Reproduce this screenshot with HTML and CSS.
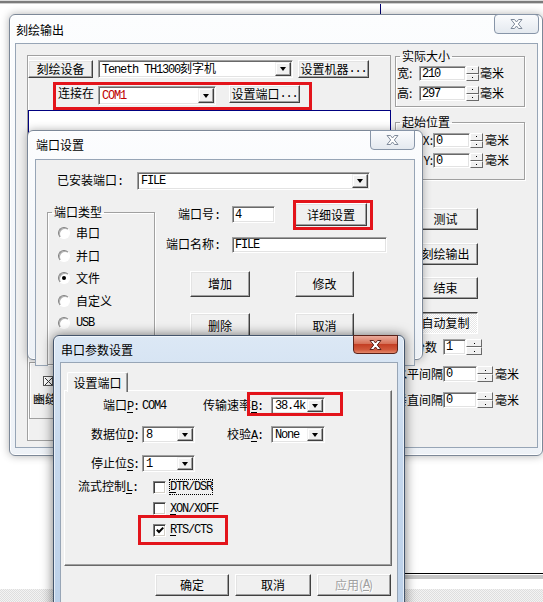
FILE: index.html
```html
<!DOCTYPE html>
<html lang="zh-CN">
<head>
    <meta charset="UTF-8">
    <title>刻绘输出</title>
    <link rel="stylesheet" href="styles.css">
</head>
<body>
<div class="desk">
    <div class="topstrip"></div>
    <div class="bg-blueline"></div>
    <div class="bg-rule"></div>
    <div class="bg-rule-shade"></div>
    <div class="bg-band"></div>

    <!-- main window -->
    <div class="win inactive win-main">
        <div class="titlebar">
            <span class="title">刻绘输出</span>
            <span class="close"><svg width="13" height="10" viewBox="0 0 13 10"><path d="M1 .5H4.5L6.5 3 8.5 .5H12L8.3 5 12 9.5H8.5L6.5 7 4.5 9.5H1L4.7 5z"/></svg></span>
        </div>
        <div class="client main-client">
            <div class="left-panel">
                <div class="row-dev">
                    <span class="btn b-dev">刻绘设备</span>
                    <div class="combo c-dev"><span class="val"><span class="en">Teneth TH1300</span>刻字机</span><span class="drop"></span></div>
                    <span class="btn b-machine">设置机器<span class="en">...</span></span>
                </div>
                <div class="row-conn">
                    <span class="lbl">连接在</span>
                    <div class="combo c-com"><span class="val en red">COM1</span><span class="drop"></span></div>
                    <span class="btn b-setport">设置端口<span class="en">...</span></span>
                </div>
                <div class="preview"></div>
                <div class="lower-box">
                    <span class="xbox"><svg width="7" height="7" viewBox="0 0 7 7"><path d="M0 0L7 7M7 0L0 7" stroke="#333" stroke-width="1"/></svg></span>
                    <span class="lower-text">豳缝</span>
                </div>
            </div>
            <div class="right-col">
                <fieldset class="grp g-size">
                    <legend>实际大小</legend>
                    <div class="spin-row">
                        <span class="lbl">宽:</span>
                        <span class="edit en">210</span>
                        <span class="spin"><i></i><i></i></span>
                        <span class="unit">毫米</span>
                    </div>
                    <div class="spin-row">
                        <span class="lbl">高:</span>
                        <span class="edit en">297</span>
                        <span class="spin"><i></i><i></i></span>
                        <span class="unit">毫米</span>
                    </div>
                </fieldset>
                <fieldset class="grp g-pos">
                    <legend>起始位置</legend>
                    <div class="spin-row">
                        <span class="lbl">X:</span>
                        <span class="edit en">0</span>
                        <span class="spin"><i></i><i></i></span>
                        <span class="unit">毫米</span>
                    </div>
                    <div class="spin-row">
                        <span class="lbl">Y:</span>
                        <span class="edit en">0</span>
                        <span class="spin"><i></i><i></i></span>
                        <span class="unit">毫米</span>
                    </div>
                </fieldset>
                <div class="cmd-btns">
                    <span class="btn">测试</span>
                    <span class="btn">刻绘输出</span>
                    <span class="btn">结束</span>
                    <span class="btn pushed">自动复制</span>
                </div>
                <div class="copy-rows">
                    <div class="copy-row c-count">
                        <span class="lbl">份数</span>
                        <span class="edit en">1</span>
                        <span class="spin"><i></i><i></i></span>
                    </div>
                    <div class="copy-row c-h">
                        <span class="lbl">水平间隔</span>
                        <span class="edit en">0</span>
                        <span class="spin"><i></i><i></i></span>
                        <span class="unit">毫米</span>
                    </div>
                    <div class="copy-row c-v">
                        <span class="lbl">垂直间隔</span>
                        <span class="edit en">0</span>
                        <span class="spin"><i></i><i></i></span>
                        <span class="unit">毫米</span>
                    </div>
                </div>
            </div>
        </div>
    </div>

    <!-- port settings -->
    <div class="win inactive win-port">
        <div class="titlebar">
            <span class="title">端口设置</span>
            <span class="close"><svg width="13" height="10" viewBox="0 0 13 10"><path d="M1 .5H4.5L6.5 3 8.5 .5H12L8.3 5 12 9.5H8.5L6.5 7 4.5 9.5H1L4.7 5z"/></svg></span>
        </div>
        <div class="client">
            <div class="row-installed">
                <span class="lbl">已安装端口<span class="en">:</span></span>
                <div class="combo c-installed"><span class="val en">FILE</span><span class="drop"></span></div>
            </div>
            <div class="port-main">
                <fieldset class="grp g-type">
                    <legend>端口类型</legend>
                    <div class="radios">
                        <div class="radio-row"><span class="radio"></span>串口</div>
                        <div class="radio-row"><span class="radio"></span>并口</div>
                        <div class="radio-row"><span class="radio on"></span>文件</div>
                        <div class="radio-row"><span class="radio"></span>自定义</div>
                        <div class="radio-row"><span class="radio"></span><span class="en">USB</span></div>
                    </div>
                </fieldset>
                <div class="port-right">
                    <div class="pr-row pr-num">
                        <span class="lbl">端口号<span class="en">:</span></span>
                        <span class="edit en e-num">4</span>
                        <span class="btn b-detail">详细设置</span>
                    </div>
                    <div class="pr-row pr-name">
                        <span class="lbl">端口名称<span class="en">:</span></span>
                        <span class="edit en e-name">FILE</span>
                    </div>
                    <div class="pr-btns">
                        <span class="btn">增加</span>
                        <span class="btn">修改</span>
                    </div>
                    <div class="pr-btns second">
                        <span class="btn">删除</span>
                        <span class="btn">取消</span>
                    </div>
                </div>
            </div>
        </div>
    </div>

    <!-- serial parameters -->
    <div class="win active win-serial">
        <div class="titlebar">
            <span class="title">串口参数设置</span>
            <span class="close"><svg width="13" height="10" viewBox="0 0 13 10"><path d="M1 .5H4.5L6.5 3 8.5 .5H12L8.3 5 12 9.5H8.5L6.5 7 4.5 9.5H1L4.7 5z"/></svg></span>
        </div>
        <div class="client">
            <div class="tabs"><span class="tab">设置端口</span></div>
            <div class="tab-panel">
                <div class="param-grid">
                    <span class="lbl">端口<u class="en">P</u><span class="en">:</span></span>
                    <span class="en static">COM4</span>
                    <span class="lbl lbl2">传输速率<u class="en">B</u><span class="en">:</span></span>
                    <div class="combo"><span class="val en">38.4k</span><span class="drop"></span></div>

                    <span class="lbl">数据位<u class="en">D</u><span class="en">:</span></span>
                    <div class="combo"><span class="val en">8</span><span class="drop"></span></div>
                    <span class="lbl lbl2">校验<u class="en">A</u><span class="en">:</span></span>
                    <div class="combo"><span class="val en">None</span><span class="drop"></span></div>

                    <span class="lbl">停止位<u class="en">S</u><span class="en">:</span></span>
                    <div class="combo"><span class="val en">1</span><span class="drop"></span></div>
                </div>
                <div class="flow-grid">
                    <span class="lbl">流式控制<u class="en">L</u><span class="en">:</span></span>
                    <div class="chk-row"><span class="chk"></span><span class="en focus"><u>D</u>TR/DSR</span></div>
                    <span></span>
                    <div class="chk-row"><span class="chk"></span><span class="en"><u>X</u>ON/XOFF</span></div>
                    <span></span>
                    <div class="chk-row"><span class="chk"><svg width="8" height="8" viewBox="0 0 8 8"><path d="M.8 3.8L3 6 7.2 1.6" fill="none" stroke="#000" stroke-width="2"/></svg></span><span class="en"><u>R</u>TS/CTS</span></div>
                </div>
            </div>
            <div class="dlg-btns">
                <span class="btn b-ok">确定</span>
                <span class="btn b-cancel">取消</span>
                <span class="btn b-apply disabled">应用(<u class="en">A</u>)</span>
            </div>
        </div>
    </div>

    <!-- red annotation marks -->
    <div class="mark m-conn"></div>
    <div class="mark m-detail"></div>
    <div class="mark m-baud"></div>
    <div class="mark m-rts"></div>
</div>
</body>
</html>
```

FILE: styles.css
```css
* {
    box-sizing: border-box;
}

body {
    margin: 0;
    background: #fff;
    color: #000;
    font: 12px/14px "Noto Sans CJK SC", sans-serif;
}

.en {
    font-family: "Liberation Mono", "Noto Sans CJK SC", monospace;
    letter-spacing: -1.2px;
}

u.en,
.en u {
    text-decoration: underline;
    text-underline-offset: 2px;
}

.red {
    color: #c00000;
}

.desk {
    position: relative;
    width: 543px;
    height: 602px;
    overflow: hidden;
    background: #fff;
}

/* pieces of the application behind the dialogs */
.topstrip {
    height: 4px;
    background: linear-gradient(#dcdcdc 0 1px, #7b7b7b 1px 3px, #cfcfcf 3px);
}

.bg-blueline {
    position: absolute;
    left: 380px;
    top: 4px;
    width: 1px;
    height: 10px;
    background: #00006e;
}

.bg-rule {
    position: absolute;
    left: 400px;
    top: 573px;
    width: 143px;
    height: 1px;
    background: #000;
}

.bg-rule-shade {
    position: absolute;
    left: 400px;
    top: 575px;
    width: 143px;
    height: 4px;
    background: #c6c6c6;
}

.bg-band {
    position: absolute;
    left: 0;
    top: 589px;
    width: 543px;
    height: 13px;
    background: repeating-conic-gradient(#dedede 0 25%, #f3f3f3 0 50%) 0 0 / 2px 2px;
}

/* windows */
.win {
    position: absolute;
    display: flex;
    flex-direction: column;
    border: 1px solid #7c8898;
    border-radius: 6px;
}

.win.inactive {
    background: linear-gradient(#fcfdfe, #eef2f7);
    box-shadow: 0 0 8px rgba(0, 0, 0, 0.3), inset 0 0 0 1px rgba(255, 255, 255, 0.9);
}

.win.active {
    background: linear-gradient(#dce8f5, #c6d8ed 40%, #bacfe8);
    border-color: #44556c;
    box-shadow: 0 0 12px rgba(0, 0, 0, 0.55), inset 0 0 0 1px rgba(255, 255, 255, 0.6);
}

.titlebar {
    display: flex;
    justify-content: space-between;
    align-items: flex-start;
    flex: none;
}

.title {
    padding: 7px 0 0 1px;
}

.close {
    width: 45px;
    height: 20px;
    margin-top: -1px;
    border: 1px solid #8795a8;
    border-radius: 0 0 4px 4px;
    background: linear-gradient(#fafbfd, #e4e9ef);
    display: flex;
    align-items: center;
    justify-content: center;
}

.close path {
    fill: #fff;
    stroke: #7f8a9a;
}

.active .close {
    height: 19px;
    border-color: #5b2219;
    background: linear-gradient(#ebab9c, #d67158 45%, #c43f25 50%, #d0583b 80%, #e4896c);
}

.active .close path {
    fill: #fff;
    stroke: #5a2119;
}

.client {
    flex: 1;
    background: #f0f0f0;
    border: 1px solid #97a5b6;
}

.win-main {
    left: 9px;
    top: 14px;
    width: 534px;
    height: 442px;
    padding: 0 4px 7px 5px;
    background: radial-gradient(circle at 378px 16px, rgba(160, 205, 240, 0.75), rgba(160, 205, 240, 0) 16px), linear-gradient(#fcfdfe, #eef2f7);
}

.win-main .titlebar {
    height: 28px;
}

.win-main .title {
    padding-top: 8px;
}

.win-main .close {
    margin-right: -1px;
    border-radius: 4px;
}

.win-port {
    left: 27px;
    top: 130px;
    width: 396px;
    height: 230px;
    padding: 0 7px 7px;
}

.win-port .titlebar {
    height: 28px;
}

.win-serial {
    left: 53px;
    top: 335px;
    width: 352px;
    height: 290px;
    padding: 0 6px 7px;
}

.win-serial .titlebar {
    height: 26px;
}

/* classic controls */
.btn {
    display: flex;
    align-items: center;
    justify-content: center;
    background: #f0f0f0;
    border: 1px solid;
    border-color: #fff #404040 #404040 #fff;
    box-shadow: inset -1px -1px #a0a0a0, inset 1px 1px #e3e3e3;
    white-space: nowrap;
}

.btn.pushed {
    border-color: #404040 #fff #fff #404040;
    box-shadow: inset 1px 1px #a0a0a0;
    background: repeating-conic-gradient(#fff 0 25%, #e6e6e6 0 50%) 0 0 / 2px 2px;
}

.btn.disabled {
    color: #a0a0a0;
    text-shadow: 1px 1px #fff;
}

.edit,
.combo {
    display: flex;
    align-items: center;
    background: #fff;
    border: 1px solid;
    border-color: #a0a0a0 #fff #fff #a0a0a0;
    box-shadow: inset 1px 1px #696969, inset -1px -1px #e3e3e3;
    white-space: nowrap;
}

.edit {
    padding-left: 2px;
}

.combo {
    align-items: stretch;
    padding: 1px;
}

.combo .val {
    flex: 1;
    min-width: 0;
    align-self: center;
    padding-left: 2px;
    line-height: 14px;
    white-space: nowrap;
}

.drop {
    width: 16px;
    flex: none;
    display: flex;
    align-items: center;
    justify-content: center;
    background: #f0f0f0;
    border: 1px solid;
    border-color: #f0f0f0 #404040 #404040 #f0f0f0;
    box-shadow: inset -1px -1px #a0a0a0, inset 1px 1px #fff;
}

.drop::after {
    content: "";
    border-left: 3.5px solid transparent;
    border-right: 3.5px solid transparent;
    border-top: 4px solid #000;
}

.spin {
    display: flex;
    flex-direction: column;
    flex: none;
}

.spin i {
    flex: 1;
    display: flex;
    align-items: center;
    justify-content: center;
    background: #f0f0f0;
    border: 1px solid;
    border-color: #fff #696969 #696969 #fff;
}

.spin i::after {
    content: "";
    width: 1px;
    height: 1px;
    background: #000;
}

.grp {
    margin: 0;
    padding: 0 0 5px 1px;
    min-width: 0;
    border: 1px solid #a0a0a0;
    box-shadow: 1px 1px #fff, inset 1px 1px #fff;
}

.grp legend {
    margin-left: 3px;
    padding: 0 2px;
    line-height: 14px;
}

.radio {
    width: 12px;
    height: 12px;
    flex: none;
    display: flex;
    align-items: center;
    justify-content: center;
    border-radius: 50%;
    background: #fff;
    border: 1px solid;
    border-color: #808080 #fff #fff #808080;
    box-shadow: inset 1px 1px #b0b0b0;
}

.radio.on::after {
    content: "";
    width: 4px;
    height: 4px;
    border-radius: 50%;
    background: #000;
}

.chk {
    width: 13px;
    height: 13px;
    flex: none;
    display: flex;
    align-items: center;
    justify-content: center;
    background: #fff;
    border: 1px solid;
    border-color: #808080 #fff #fff #808080;
    box-shadow: inset 1px 1px #404040, inset -1px -1px #d4d0c8;
}

/* main window content */
.main-client {
    display: flex;
    align-items: flex-start;
}

.left-panel {
    width: 364px;
    height: 386px;
    margin: 11px 0 0 11px;
    display: flex;
    flex-direction: column;
    border: 1px solid #a0a0a0;
    box-shadow: inset 1px 1px #fff;
}

.row-dev {
    display: flex;
    gap: 5px;
    height: 18px;
    margin-top: 4px;
}

.b-dev {
    width: 65px;
}

.c-dev {
    width: 195px;
}

.b-machine {
    width: 71px;
}

.row-conn {
    display: flex;
    align-items: center;
    height: 20px;
    margin-top: 7px;
    padding-left: 30px;
}

.row-conn .lbl {
    margin-top: -4px;
}

.c-com {
    width: 118px;
    height: 19px;
    margin: 1px 0 0 4px;
}

.b-setport {
    width: 71px;
    height: 18px;
    margin: -2px 0 0 13px;
}

.preview {
    width: 363px;
    height: 242px;
    margin-top: 5px;
    background: #fff;
    border: 1px solid #000080;
}

.lower-box {
    width: 200px;
    height: 57px;
    margin: 10px 0 0 1px;
    padding: 13px 0 0 3px;
    display: flex;
    flex-direction: column;
    border: 1px solid #a0a0a0;
    box-shadow: inset 1px 1px #fff;
}

.xbox {
    width: 10px;
    height: 10px;
    margin-left: 10px;
    display: flex;
    align-items: center;
    justify-content: center;
    border: 1px solid #555;
    background: #fff;
}

.lower-text {
    margin-top: 6px;
}

.right-col {
    width: 130px;
    margin: 5px 0 0 4px;
    display: flex;
    flex-direction: column;
}

.spin-row {
    display: flex;
    height: 15px;
    margin-top: 5px;
}

.spin-row:first-of-type {
    margin-top: 3px;
}

.spin-row .lbl {
    width: 22px;
}

.g-size .edit {
    width: 47px;
}

.spin-row .spin {
    width: 13px;
}

.spin-row .unit {
    margin-left: 1px;
}

.g-pos {
    margin-top: 8px;
    padding-bottom: 11px;
}

.g-pos .spin-row:first-of-type {
    margin-top: 4px;
}

.g-pos .lbl {
    width: 36px;
    text-align: right;
}

.g-pos .edit {
    width: 37px;
}

.g-pos .unit {
    margin-left: 2px;
}

.cmd-btns {
    display: flex;
    flex-direction: column;
    gap: 12.5px;
    margin: 28px 0 0 18px;
}

.cmd-btns .btn {
    width: 65px;
    height: 22px;
}

.copy-rows {
    margin-top: 5.5px;
    display: flex;
    flex-direction: column;
}

.copy-row {
    display: flex;
    height: 16px;
}

.copy-row .lbl {
    width: 44px;
    padding-right: 2px;
    text-align: right;
    white-space: nowrap;
    line-height: 16px;
}

.copy-row .edit {
    width: 34px;
    margin-left: 4px;
}

.c-count .edit {
    width: 23px;
}

.copy-row .spin {
    width: 16px;
}

.copy-row .unit {
    margin-left: 2px;
    line-height: 16px;
}

.c-h {
    margin-top: 11px;
}

.c-v {
    margin-top: 10px;
}

/* port settings content */
.row-installed {
    display: flex;
    align-items: center;
    margin-top: 12px;
    padding-left: 21px;
}

.row-installed .lbl {
    width: 80px;
}

.c-installed {
    width: 233px;
    height: 18px;
}

.port-main {
    display: flex;
    align-items: flex-start;
    margin-top: 15px;
}

.g-type {
    width: 108px;
    height: 160px;
    margin-left: 11px;
}

.radios {
    display: flex;
    flex-direction: column;
    gap: 8.5px;
    margin-top: 7px;
    padding-left: 9px;
}

.radio-row {
    display: flex;
    align-items: center;
    gap: 6px;
    height: 14px;
}

.port-right {
    margin-top: -2px;
    display: flex;
    flex-direction: column;
}

.pr-row {
    display: flex;
    align-items: center;
}

.pr-row .lbl {
    width: 65px;
    text-align: right;
}

.pr-num {
    height: 23px;
}

.e-num {
    width: 43px;
    height: 17px;
    margin-left: 12px;
}

.b-detail {
    width: 72px;
    height: 23px;
    margin-left: 20px;
}

.pr-name {
    height: 16px;
    margin-top: 11px;
}

.e-name {
    width: 155px;
    height: 16px;
    margin-left: 12px;
}

.pr-btns {
    display: flex;
    gap: 45px;
    margin-top: 18px;
    padding-left: 35px;
}

.pr-btns.second {
    margin-top: 16px;
}

.pr-btns .btn {
    width: 60px;
    height: 26px;
}

.pr-btns .btn + .btn {
    width: 59px;
}

/* serial parameters content */
.tabs {
    display: flex;
    margin: 9px 0 -2px 6px;
}

.tab {
    position: relative;
    z-index: 1;
    width: 61px;
    height: 20px;
    padding-top: 3px;
    text-align: center;
    background: #f0f0f0;
    border: 1px solid;
    border-color: #fff #696969 transparent #fff;
    border-bottom: none;
    border-radius: 2px 2px 0 0;
    box-shadow: inset -1px 0 #a0a0a0;
}

.tab-panel {
    width: 328px;
    height: 176px;
    margin-left: 3px;
    padding-top: 6px;
    border: 1px solid;
    border-color: #fff #696969 #696969 #fff;
    box-shadow: inset -1px -1px #a0a0a0;
}

.param-grid {
    display: grid;
    grid-template-columns: 77px 53px 76px 54px;
    grid-auto-rows: 17px;
    row-gap: 12px;
    align-items: center;
}

.param-grid .lbl {
    padding-right: 3px;
    text-align: right;
}

.param-grid .lbl2 {
    padding-right: 8px;
}

.param-grid .combo {
    height: 17px;
}

.static {
    padding-left: 0;
}

.flow-grid {
    display: grid;
    grid-template-columns: 73px auto;
    grid-auto-rows: 14px;
    row-gap: 7.5px;
    margin-top: 8px;
    align-items: center;
}

.flow-grid .lbl {
    text-align: right;
}

.chk-row {
    display: flex;
    align-items: center;
    gap: 4px;
    padding-left: 15px;
}

.focus {
    outline: 1px dotted #000;
    outline-offset: 0;
}

.dlg-btns {
    display: flex;
    justify-content: flex-end;
    gap: 6px;
    margin-top: 8px;
    padding-right: 6px;
}

.dlg-btns .btn {
    width: 74px;
    height: 22px;
}

.dlg-btns .b-cancel {
    width: 76px;
}

/* red annotation boxes drawn over the screenshot */
.mark {
    position: absolute;
    border: 3px solid #e3141b;
}

.m-conn {
    left: 53px;
    top: 82px;
    width: 259px;
    height: 28px;
}

.m-detail {
    left: 293px;
    top: 200px;
    width: 80px;
    height: 30px;
}

.m-baud {
    left: 247px;
    top: 392px;
    width: 96px;
    height: 24px;
}

.m-rts {
    left: 138px;
    top: 515px;
    width: 90px;
    height: 30px;
}
```
